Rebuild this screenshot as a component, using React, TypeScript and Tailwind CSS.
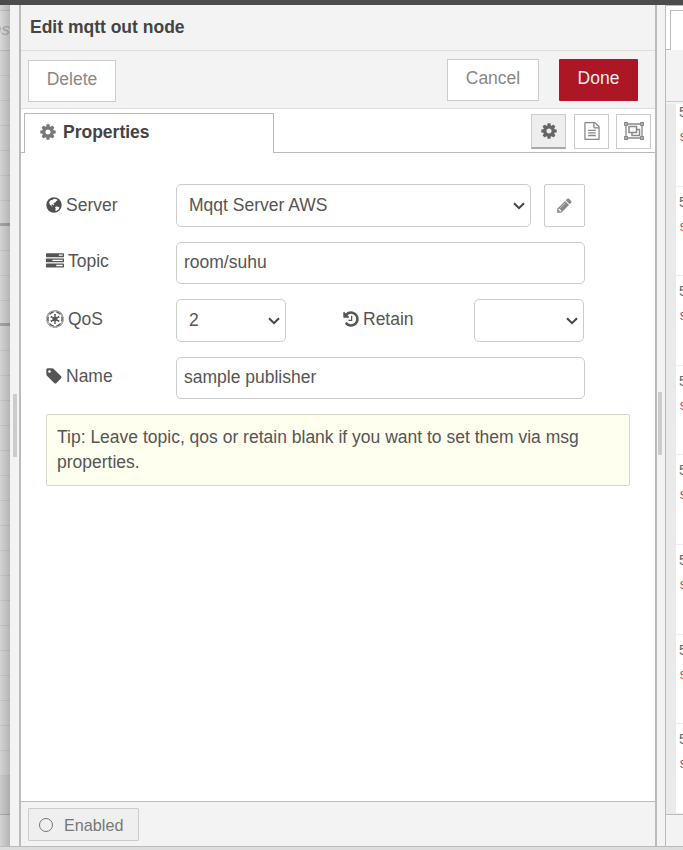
import React from "react";
import { FaEmpire } from "react-icons/fa";

const COG = "M1152 896q0-106-75-181t-181-75-181 75-75 181 75 181 181 75 181-75 75-181zm512-109v222q0 12-8 23t-20 13l-185 28q-19 54-39 91 35 50 107 138 10 12 10 25t-9 23q-27 37-99 108t-94 71q-12 0-26-9l-138-108q-44 23-91 38-16 136-29 186-7 28-36 28h-222q-14 0-24.5-8.5t-11.5-21.5l-28-184q-49-16-90-37l-141 107q-10 9-25 9-14 0-25-11-126-114-165-168-7-10-7-23 0-12 8-23 15-21 51-66.5t54-70.5q-27-50-41-99l-183-27q-13-2-21-12.5t-8-23.5v-222q0-12 8-23t19-13l186-28q14-46 39-92-40-57-107-138-10-12-10-24 0-10 9-23 26-36 98.500-107.500t94.500-71.500q13 0 26 10l138 107q44-23 91-38 16-136 29-186 7-28 36-28h222q14 0 24.500 8.500t11.500 21.500l28 184q49 16 90 37l142-107q9-9 24-9 13 0 25 10 129 119 165 170 7 8 7 22 0 12-8 23-15 21-51 66.500t-54 70.500q26 50 41 98l183 28q13 2 21 12.500t8 23.500z";
const TAG = "M576 448q0-53-37.5-90.5t-90.5-37.5-90.5 37.5-37.5 90.5 37.5 90.5 90.5 37.5 90.5-37.5 37.5-90.5zm1067 576q0 53-37 90l-491 492q-39 37-91 37-53 0-90-37l-715-716q-38-37-64.5-101t-26.5-117v-416q0-52 38-90t90-38h416q53 0 117 26.500t102 64.500l715 714q37 39 37 91z";
const HISTORY = "M1664 896q0 156-61 298t-164 245-245 164-298 61q-172 0-327-72.5t-264-204.5q-7-10-6.5-22.5t8.5-20.5l137-138q10-9 25-9 16 2 23 12 73 95 179 147t225 52q104 0 198.500-40.500t163.500-109.500 109.500-163.500 40.500-198.500-40.500-198.500-109.500-163.500-163.500-109.500-198.500-40.500q-98 0-188 35.500t-160 101.500l137 138q31 30 14 69-17 40-59 40h-448q-26 0-45-19t-19-45v-448q0-42 40-59 39-17 69 14l130 129q107-101 244.500-156.500t284.500-55.500q156 0 298 61t245 164 164 245 61 298zm-640-288v448q0 14-9 23t-23 9h-320q-14 0-23-9t-9-23v-64q0-14 9-23t23-9h224v-352q0-14 9-23t23-9h64q14 0 23 9t9 23z";
const PENCIL = "M491 1536l91-91-235-235-91 91v107h128v128h107zm523-928q0-22-22-22-10 0-17 7l-542 542q-7 7-7 17 0 22 22 22 10 0 17-7l542-542q7-7 7-17zm-54-192l416 416-832 832h-416v-416zm683 96q0 53-37 90l-166 166-416-416 166-165q36-38 90-38 53 0 91 38l235 234q37 39 37 91z";
const TASKS = "M1024 1408h640v-128h-640v128zm-384-512h1024v-128h-1024v128zm640-512h384v-128h-384v128zm512 832v256q0 26-19 45t-45 19h-1664q-26 0-45-19t-19-45v-256q0-26 19-45t45-19h1664q26 0 45 19t19 45zm0-512v256q0 26-19 45t-45 19h-1664q-26 0-45-19t-19-45v-256q0-26 19-45t45-19h1664q26 0 45 19t19 45zm0-512v256q0 26-19 45t-45 19h-1664q-26 0-45-19t-19-45v-256q0-26 19-45t45-19h1664q26 0 45 19t19 45z";
const FILE = "M1596 380q28 28 48 76t20 88v1152q0 40-28 68t-68 28h-1344q-40 0-68-28t-28-68v-1600q0-40 28-68t68-28h896q40 0 88 20t76 48zm-444-244v376h376q-10-29-22-41l-313-313q-12-12-41-22zm384 1528v-1024h-416q-40 0-68-28t-28-68v-416h-768v1536h1280zm-1024-864q0-14 9-23t23-9h704q14 0 23 9t9 23v64q0 14-9 23t-23 9h-704q-14 0-23-9t-9-23v-64zm736 224q14 0 23 9t9 23v64q0 14-9 23t-23 9h-704q-14 0-23-9t-9-23v-64q0-14 9-23t23-9h704zm0 256q14 0 23 9t9 23v64q0 14-9 23t-23 9h-704q-14 0-23-9t-9-23v-64q0-14 9-23t23-9h704z";

function Glyph({ d, className }: { d: string; className: string }) {
  return (
    <svg viewBox="0 0 1792 1792" fill="currentColor" className={`shrink-0 ${className}`}>
      <path d={d} />
    </svg>
  );
}

function Globe() {
  return (
    <svg viewBox="0 0 16 16" className="size-[16px] shrink-0">
      <circle cx="8" cy="8" r="7.7" fill="#505050" />
      <path d="M8.600 1.800l2.500.8.3 1.200-1.300.2-.5 1.200-1.700.7-.6 1.200 1.200.6-.9.5-1.700-.9-.5 1 1.300 1.100-.7.200-2.200-2-.7-2.300 1.600-2.200 1.700-.2.900-.9zM10 9.500l2 .2 1.600 1-1.300 2-2.300 1.300-.8-.9.600-1.700-.8-1z" fill="#fff" />
    </svg>
  );
}

function ObjectGroup() {
  return (
    <svg viewBox="0 0 20 18" className="h-[18px] w-[20px]" fill="none" stroke="#888">
      <path d="M3 2h14M3 16h14M2 3v12M18 3v12" strokeWidth="1.300" />
      <path d="M.7.700h2.600v2.600H.7zM16.700.7h2.600v2.600h-2.600zM.7 14.700h2.600v2.600H.7zM16.700 14.700h2.600v2.600h-2.600z" fill="#ccc" strokeWidth="1.200" />
      <path d="M5 4.500h7.500v6H5zM12.500 7.500H15.500v6H8v-3" strokeWidth="1.500" />
    </svg>
  );
}

function Chevron() {
  return (
    <svg viewBox="0 0 12 8" className="h-[8px] w-[12px] shrink-0" fill="none" stroke="#444" strokeWidth="2">
      <path d="M1 1.200l5 5 5-5" />
    </svg>
  );
}

function Label({ icon, gap, children }: { icon: React.ReactNode; gap: string; children: React.ReactNode }) {
  return (
    <div className={`flex h-[42px] w-[130px] shrink-0 items-center ${gap}`}>
      {icon}
      <span>{children}</span>
    </div>
  );
}

const field = "flex items-center rounded-[5px] border border-[#ccc] bg-white";

function Workspace() {
  return (
    <div className="relative h-[846px] w-[10px] shrink-0 overflow-hidden bg-[#d4d4d4]">
      <div className="h-[5px]" />
      <div className="flex h-[41px] justify-end border-y border-[#bdbdbd] bg-[#d8d8d8] pt-[7px] text-[17px] leading-[24px] text-[#aaa] italic">
        <span>ons</span>
      </div>
      {Array.from({ length: 29 }, (_, i) => (
        <div key={i} className={i === 6 || i === 10 ? "h-[25px] border-b-[3px] border-[#a5a5a5]" : "h-[25px] border-b border-[#c6c6c6]"} />
      ))}
      <div className="h-[18px] bg-[#cbcbcb]" />
      <div className="h-[21px] border-b border-[#aaa] bg-[#cbcbcb]" />
      <div className="h-[40px] bg-[#d4d4d4]" />
      <div className="absolute inset-0 bg-linear-to-r from-transparent to-black/15" />
    </div>
  );
}

function Grip() {
  return <div className="h-[63px] w-[4px] shrink-0 bg-[#ccc]" />;
}

export default function App() {
  return (
    <div className="flex h-[850px] w-[683px] flex-col overflow-hidden bg-[#ddd] font-['Liberation_Sans',Arial,sans-serif] text-[17.500px] text-[#555]">
      <div className="h-[5px] shrink-0 bg-[#4c4c4c]" />
      <div className="flex h-[841px] shrink-0 overflow-hidden">
        <Workspace />
        <div className="w-[9px] shrink-0 bg-[#f3f3f3] pt-[389px] pl-[3px]"><Grip /></div>

        <main className="flex w-[638px] shrink-0 flex-col border-r-[2px] border-l-[2px] border-[#bbb] bg-white">
          <header className="flex h-[46px] shrink-0 items-center border-b border-[#ddd] bg-[#f3f3f3] pl-[9px] font-bold text-[#444]">
            <span className="-mt-[1px]">Edit mqtt out node</span>
          </header>
          <div className="flex h-[58px] shrink-0 items-start border-b border-[#ddd] bg-[#f3f3f3] pl-[7px] text-[#888]">
            <button className="mt-[9px] h-[42px] w-[88px] border border-[#ccc] bg-white pb-[3px]">Delete</button>
            <button className="mt-[8px] ml-[331px] h-[42px] w-[92px] border border-[#ccc] bg-white pb-[3px]">Cancel</button>
            <button className="mt-[8px] ml-[20px] h-[42px] w-[79px] rounded-[1px] bg-[#ad1625] pb-[3px] text-[#eee]">Done</button>
          </div>
          <div className="flex h-[44px] shrink-0">
            <div className="w-[3px] border-b border-[#bbb]" />
            <div className="mt-[4px] flex w-[250px] items-center gap-[6px] border-x border-t border-[#bbb] pb-[3px] pl-[14px] font-bold text-[#444]">
              <Glyph d={COG} className="size-[18px] text-[#777]" />
              Properties
            </div>
            <div className="flex grow items-start border-b border-[#bbb] pt-[5px] pl-[257px]">
              <div className="flex h-[35px] w-[35px] items-center justify-center border border-b-2 border-[#ccc] border-b-[#aaa] bg-[#eee]">
                <Glyph d={COG} className="size-[18px] text-[#666]" />
              </div>
              <div className="ml-[8px] flex h-[35px] w-[35px] items-center justify-center border border-[#ccc] pb-[2px]">
                <Glyph d={FILE} className="size-[18px] text-[#888]" />
              </div>
              <div className="ml-[7px] flex h-[35px] w-[35px] items-center justify-center border border-[#ccc] pb-[2px]">
                <ObjectGroup />
              </div>
            </div>
          </div>

          <div className="flex grow flex-col pt-[31px] pl-[25px]">
            <div className="flex h-[58px]">
              <Label icon={<Globe />} gap="gap-[4px]">Server</Label>
              <div className={`${field} h-[43px] w-[355px] justify-between pr-[5px] pl-[12px]`}>
                Mqqt Server AWS<Chevron />
              </div>
              <div className="ml-[13px] flex h-[43px] w-[41px] items-center justify-center rounded-[2px] border border-[#ccc]">
                <Glyph d={PENCIL} className="size-[17px] text-[#888]" />
              </div>
            </div>
            <div className="flex h-[57px]">
              <Label icon={<Glyph d={TASKS} className="size-[18px]" />} gap="gap-[4px] pb-[4px]">Topic</Label>
              <div className={`${field} h-[42px] w-[409px] pb-[2px] pl-[7px]`}>room/suhu</div>
            </div>
            <div className="flex h-[58px]">
              <Label icon={<FaEmpire className="size-[18px]" />} gap="gap-[4px] pb-[2px]">QoS</Label>
              <div className={`${field} h-[43px] w-[110px] justify-between pr-[5px] pl-[12px]`}>2<Chevron /></div>
              <div className="ml-[56px]">
                <Label icon={<Glyph d={HISTORY} className="size-[18px]" />} gap="gap-[3px] pb-[2px]">Retain</Label>
              </div>
              <div className={`${field} ml-[2px] h-[43px] w-[110px] justify-end pr-[5px]`}><Chevron /></div>
            </div>
            <div className="flex h-[57px]">
              <Label icon={<Glyph d={TAG} className="-ml-[1px] size-[18px]" />} gap="gap-[3px] pb-[4px]">Name</Label>
              <div className={`${field} h-[42px] w-[409px] pb-[2px] pl-[7px]`}>sample publisher</div>
            </div>
            <div className="h-[72px] w-[584px] rounded-[2px] border border-[#d5d8c4] bg-[#fffff0] pt-[10px] pl-[10px] leading-[25px]">
              Tip: Leave topic, qos or retain blank if you want to set them via msg<br />properties.
            </div>
          </div>

          <footer className="h-[45px] shrink-0 border-t border-[#bbb] bg-[#f3f3f3] pt-[6px] pl-[7px]">
            <div className="flex h-[33px] w-[111px] items-center gap-[11px] rounded-[1px] border border-[#ccc] bg-[#efefef] pt-[1px] pl-[10px] text-[16.200px] text-[#777]">
              <span className="size-[14px] rounded-full border-[1.500px] border-[#777]" />
              Enabled
            </div>
          </footer>
        </main>

        <div className="w-[8px] shrink-0 bg-[#f3f3f3] pt-[387px] pl-[1px]"><Grip /></div>
        <aside className="flex w-[18px] shrink-0 flex-col overflow-hidden border-l border-[#bbb] bg-[#f3f3f3]">
          <div className="flex h-[45px] shrink-0 border-t border-[#bbb] bg-white">
            <div className="w-[4px] border-b border-[#bbb]" />
            <div className="mt-[4px] grow border-t border-l border-[#bbb]" />
          </div>
          <div className="h-[52px] shrink-0 border-b border-[#ccc]" />
          <div className="mt-[2px] h-[710px] shrink-0 overflow-hidden border-l-[10px] border-[#eaeaea] bg-white">
            <div className="-mt-[7px] text-[14px]">
              {Array.from({ length: 8 }, (_, i) => (
                <div key={i} className="h-[89.600px] w-[30px] border-b border-[#eee] pt-[5px] pl-[3px] leading-[20px] text-[#666]">
                  <div>5</div>
                  <div className="mt-[5px] font-['Liberation_Mono',monospace] text-[#a55]">s</div>
                </div>
              ))}
            </div>
          </div>
          <div className="grow border-t border-[#bbb]" />
        </aside>
      </div>
      <div className="h-[4px] shrink-0 border-t border-[#bbb] bg-[#ddd]" />
    </div>
  );
}
